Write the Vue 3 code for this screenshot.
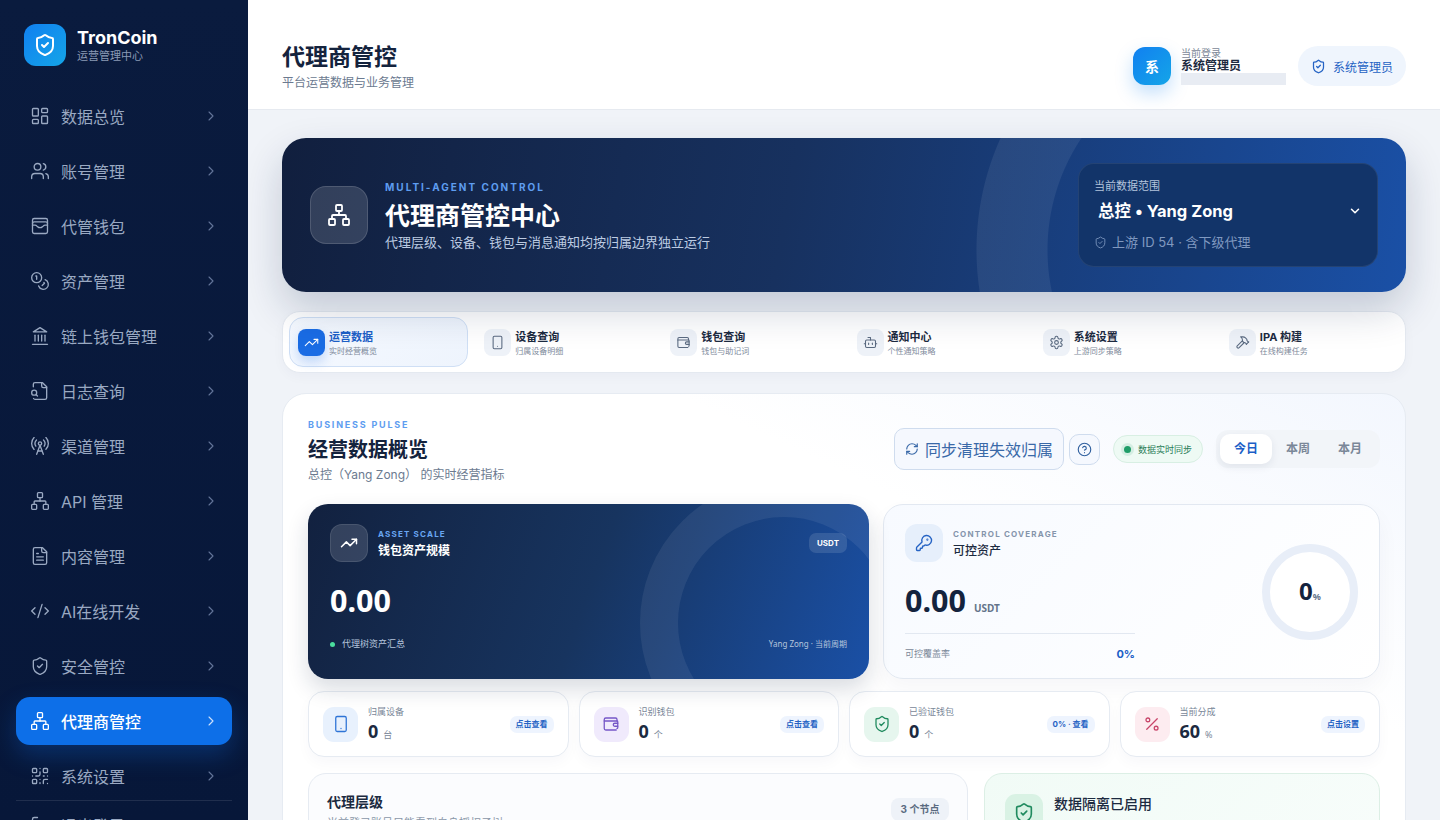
<script setup>
import { h } from 'vue'

// lucide 风格图标
const icons = {
  dashboard: '<rect x="3" y="3" width="7" height="9" rx="1"/><rect x="14" y="3" width="7" height="5" rx="1"/><rect x="14" y="12" width="7" height="9" rx="1"/><rect x="3" y="16" width="7" height="5" rx="1"/>',
  users: '<path d="M16 21v-2a4 4 0 0 0-4-4H6a4 4 0 0 0-4 4v2"/><circle cx="9" cy="7" r="4"/><path d="M16 3.128a4 4 0 0 1 0 7.744"/><path d="M22 21v-2a4 4 0 0 0-3-3.87"/>',
  walletCards: '<rect x="3" y="3" width="18" height="18" rx="2"/><path d="M3 9a2 2 0 0 1 2-2h14a2 2 0 0 1 2 2"/><path d="M3 11h3c.8 0 1.6.3 2.1.9l1.1.9c1.6 1.6 4.1 1.6 5.7 0l1.1-.9c.5-.5 1.3-.9 2.1-.9H21"/>',
  coins: '<circle cx="8" cy="8" r="6"/><path d="M18.09 10.37A6 6 0 1 1 10.34 18"/><path d="M7 6h1v4"/><path d="m16.71 13.88.7.71-2.82 2.82"/>',
  landmark: '<path d="M3 22h18"/><path d="M6 18v-7"/><path d="M10 18v-7"/><path d="M14 18v-7"/><path d="M18 18v-7"/><path d="M12 2l8 5H4z"/>',
  fileSearch: '<path d="M14 2v4a2 2 0 0 0 2 2h4"/><path d="M4.268 21a2 2 0 0 0 1.727 1H18a2 2 0 0 0 2-2V7l-5-5H6a2 2 0 0 0-2 2v3"/><path d="m9 18-1.5-1.5"/><circle cx="5" cy="14" r="3"/>',
  tower: '<path d="M4.9 16.1C1 12.2 1 5.8 4.9 1.9"/><path d="M7.8 4.7a6.14 6.14 0 0 0-.8 7.5"/><circle cx="12" cy="9" r="2"/><path d="M16.2 4.8c2 2 2.26 5.11.8 7.47"/><path d="M19.1 1.9a9.96 9.96 0 0 1 0 14.1"/><path d="M9.5 18h5"/><path d="m8 22 4-11 4 11"/>',
  network: '<rect x="16" y="16" width="6" height="6" rx="1"/><rect x="2" y="16" width="6" height="6" rx="1"/><rect x="9" y="2" width="6" height="6" rx="1"/><path d="M5 16v-3a1 1 0 0 1 1-1h12a1 1 0 0 1 1 1v3"/><path d="M12 12V8"/>',
  fileText: '<path d="M15 2H6a2 2 0 0 0-2 2v16a2 2 0 0 0 2 2h12a2 2 0 0 0 2-2V7Z"/><path d="M14 2v4a2 2 0 0 0 2 2h4"/><path d="M10 9H8"/><path d="M16 13H8"/><path d="M16 17H8"/>',
  code: '<path d="m18 16 4-4-4-4"/><path d="m6 8-4 4 4 4"/><path d="m14.5 4-5 16"/>',
  shield: '<path d="M20 13c0 5-3.5 7.5-7.66 8.95a1 1 0 0 1-.67-.01C7.5 20.5 4 18 4 13V6a1 1 0 0 1 1-1c2 0 4.5-1.2 6.24-2.72a1.17 1.17 0 0 1 1.52 0C14.51 3.81 17 5 19 5a1 1 0 0 1 1 1z"/><path d="m9 12 2 2 4-4"/>',
  qr: '<rect x="3" y="3" width="5" height="5" rx="1"/><rect x="16" y="3" width="5" height="5" rx="1"/><rect x="3" y="16" width="5" height="5" rx="1"/><path d="M21 16h-3a2 2 0 0 0-2 2v3"/><path d="M21 21v.01"/><path d="M12 7v3a2 2 0 0 1-2 2H7"/><path d="M3 12h.01"/><path d="M12 3h.01"/><path d="M12 16v.01"/><path d="M16 12h1"/><path d="M21 12v.01"/><path d="M12 21v-1"/>',
  logout: '<path d="M9 21H5a2 2 0 0 1-2-2V5a2 2 0 0 1 2-2h4"/><path d="m16 17 5-5-5-5"/><path d="M21 12H9"/>',
  chevronRight: '<path d="m9 18 6-6-6-6"/>',
  chevronDown: '<path d="m6 9 6 6 6-6"/>',
  trending: '<path d="M22 7 13.5 15.5 8.5 10.5 2 17"/><path d="M16 7h6v6"/>',
  tablet: '<rect x="5" y="2" width="14" height="20" rx="2"/><path d="M12 18h.01"/>',
  wallet: '<path d="M19 20H5a2 2 0 0 1-2-2V6a2 2 0 0 1 2-2h13a2 2 0 0 1 2 2v2"/><path d="M3 8h17a1 1 0 0 1 1 1v8a1 1 0 0 1-1 1"/><path d="M21 11h-4a2 2 0 0 0 0 4h4"/>',
  bot: '<path d="M12 8V4H8"/><rect x="4" y="8" width="16" height="12" rx="2"/><path d="M2 14h2"/><path d="M20 14h2"/><path d="M15 13v2"/><path d="M9 13v2"/>',
  gear: '<path d="M12.22 2h-.44a2 2 0 0 0-2 2v.18a2 2 0 0 1-1 1.73l-.43.25a2 2 0 0 1-2 0l-.15-.08a2 2 0 0 0-2.73.73l-.22.38a2 2 0 0 0 .73 2.73l.15.1a2 2 0 0 1 1 1.72v.51a2 2 0 0 1-1 1.74l-.15.09a2 2 0 0 0-.73 2.73l.22.38a2 2 0 0 0 2.73.73l.15-.08a2 2 0 0 1 2 0l.43.25a2 2 0 0 1 1 1.73V20a2 2 0 0 0 2 2h.44a2 2 0 0 0 2-2v-.18a2 2 0 0 1 1-1.73l.43-.25a2 2 0 0 1 2 0l.15.08a2 2 0 0 0 2.73-.73l.22-.39a2 2 0 0 0-.73-2.73l-.15-.08a2 2 0 0 1-1-1.74v-.5a2 2 0 0 1 1-1.74l.15-.09a2 2 0 0 0 .73-2.73l-.22-.38a2 2 0 0 0-2.73-.73l-.15.08a2 2 0 0 1-2 0l-.43-.25a2 2 0 0 1-1-1.73V4a2 2 0 0 0-2-2z"/><circle cx="12" cy="12" r="3"/>',
  hammer: '<path d="m15 12-8.373 8.373a1 1 0 1 1-3-3L12 9"/><path d="m18 15 4-4"/><path d="m21.5 11.5-1.914-1.914A2 2 0 0 1 19 8.172V7l-2.26-2.26a6 6 0 0 0-4.202-1.756L9 2.96l.92.82A6.18 6.18 0 0 1 12 8.4V10l2 2h1.172a2 2 0 0 1 1.414.586L18.5 14.5"/>',
  refresh: '<path d="M3 12a9 9 0 0 1 9-9 9.75 9.75 0 0 1 6.74 2.74L21 8"/><path d="M21 3v5h-5"/><path d="M21 12a9 9 0 0 1-9 9 9.75 9.75 0 0 1-6.74-2.74L3 16"/><path d="M8 16H3v5"/>',
  help: '<circle cx="12" cy="12" r="10"/><path d="M9.09 9a3 3 0 0 1 5.83 1c0 2-3 3-3 3"/><path d="M12 17h.01"/>',
  key: '<path d="M2.586 17.414A2 2 0 0 0 2 18.828V21a1 1 0 0 0 1 1h3a1 1 0 0 0 1-1v-1a1 1 0 0 1 1-1h1a1 1 0 0 0 1-1v-1a1 1 0 0 1 1-1h.172a2 2 0 0 0 1.414-.586l.814-.814a6.5 6.5 0 1 0-4-4z"/><circle cx="16.5" cy="7.5" r=".5"/>',
  percent: '<path d="M19 5 5 19"/><circle cx="6.5" cy="6.5" r="2.5"/><circle cx="17.5" cy="17.5" r="2.5"/>'
}

const Icon = (props) => h('svg', {
  viewBox: '0 0 24 24',
  fill: 'none',
  stroke: 'currentColor',
  'stroke-width': props.sw || 2,
  'stroke-linecap': 'round',
  'stroke-linejoin': 'round',
  width: props.size || 20,
  height: props.size || 20,
  innerHTML: icons[props.name]
})
Icon.props = ['name', 'size', 'sw']

const menu = [
  { label: '数据总览', icon: 'dashboard' },
  { label: '账号管理', icon: 'users' },
  { label: '代管钱包', icon: 'walletCards' },
  { label: '资产管理', icon: 'coins' },
  { label: '链上钱包管理', icon: 'landmark' },
  { label: '日志查询', icon: 'fileSearch' },
  { label: '渠道管理', icon: 'tower' },
  { label: 'API 管理', icon: 'network' },
  { label: '内容管理', icon: 'fileText' },
  { label: 'AI在线开发', icon: 'code' },
  { label: '安全管控', icon: 'shield' },
  { label: '代理商管控', icon: 'network', active: true },
  { label: '系统设置', icon: 'qr' }
]

const tabs = [
  { title: '运营数据', sub: '实时经营概览', icon: 'trending', active: true },
  { title: '设备查询', sub: '归属设备明细', icon: 'tablet' },
  { title: '钱包查询', sub: '钱包与助记词', icon: 'wallet' },
  { title: '通知中心', sub: '个性通知策略', icon: 'bot' },
  { title: '系统设置', sub: '上游同步策略', icon: 'gear' },
  { title: 'IPA 构建', sub: '在线构建任务', icon: 'hammer' }
]

const stats = [
  { label: '归属设备', value: '0', unit: '台', icon: 'tablet', tone: 'blue', action: '点击查看' },
  { label: '识别钱包', value: '0', unit: '个', icon: 'wallet', tone: 'purple', action: '点击查看' },
  { label: '已验证钱包', value: '0', unit: '个', icon: 'shield', tone: 'green', action: '0% · 查看' },
  { label: '当前分成', value: '60', unit: '%', icon: 'percent', tone: 'red', action: '点击设置' }
]
</script>

<template>
  <div class="layout">
    <aside class="sidebar">
      <div class="brand">
        <div class="brand-logo"><Icon name="shield" :size="24" /></div>
        <div>
          <div class="brand-name">TronCoin</div>
          <div class="brand-sub">运营管理中心</div>
        </div>
      </div>
      <nav class="menu">
        <a v-for="item in menu" :key="item.label" class="menu-item" :class="{ active: item.active }">
          <Icon :name="item.icon" :size="20" :sw="1.6" />
          <span class="menu-label">{{ item.label }}</span>
          <Icon name="chevronRight" :size="16" :sw="1.6" class="menu-arrow" />
        </a>
      </nav>
      <div class="menu-foot">
        <a class="menu-item">
          <Icon name="logout" :size="20" :sw="1.6" />
          <span class="menu-label">退出登录</span>
        </a>
      </div>
    </aside>

    <div class="content">
      <header class="topbar">
        <div>
          <h1 class="page-title">代理商管控</h1>
          <p class="page-sub">平台运营数据与业务管理</p>
        </div>
        <div class="user-area">
          <div class="avatar">系</div>
          <div class="user-text">
            <div class="user-hint">当前登录</div>
            <div class="user-name">系统管理员</div>
            <div class="user-mask"></div>
          </div>
          <div class="role-pill"><Icon name="shield" :size="15" />系统管理员</div>
        </div>
      </header>

      <main class="main">
        <section class="hero">
          <div class="hero-ring"></div>
          <div class="hero-icon"><Icon name="network" :size="24" :sw="1.8" /></div>
          <div class="hero-text">
            <div class="eyebrow">MULTI-AGENT CONTROL</div>
            <h2 class="hero-title">代理商管控中心</h2>
            <p class="hero-sub">代理层级、设备、钱包与消息通知均按归属边界独立运行</p>
          </div>
          <div class="scope">
            <div class="scope-label">当前数据范围</div>
            <div class="scope-value">
              <span>总控 • Yang Zong</span>
              <Icon name="chevronDown" :size="14" :sw="2.6" />
            </div>
            <div class="scope-foot"><Icon name="shield" :size="13" :sw="1.6" />上游 ID 54 · 含下级代理</div>
          </div>
        </section>

        <section class="tabs">
          <div v-for="tab in tabs" :key="tab.title" class="tab" :class="{ active: tab.active }">
            <div class="tab-icon"><Icon :name="tab.icon" :size="15" :sw="1.7" /></div>
            <div class="tab-text">
              <div class="tab-title">{{ tab.title }}</div>
              <div class="tab-sub">{{ tab.sub }}</div>
            </div>
          </div>
        </section>

        <section class="panel">
          <div class="panel-head">
            <div class="panel-intro">
              <div class="eyebrow pulse">BUSINESS PULSE</div>
              <h3 class="panel-title">经营数据概览</h3>
              <p class="panel-sub">总控（Yang Zong） 的实时经营指标</p>
            </div>
            <div class="panel-actions">
              <button class="sync-btn"><Icon name="refresh" :size="14" :sw="2" />同步清理失效归属</button>
              <button class="help-btn"><Icon name="help" :size="15" :sw="1.8" /></button>
              <div class="live"><i class="live-dot"></i>数据实时同步</div>
              <div class="segment">
                <span class="seg active">今日</span>
                <span class="seg">本周</span>
                <span class="seg">本月</span>
              </div>
            </div>
          </div>

          <div class="cards">
            <div class="card-asset">
              <div class="asset-ring"></div>
              <div class="card-top">
                <div class="card-icon glass"><Icon name="trending" :size="18" :sw="2" /></div>
                <div class="card-heading">
                  <div class="mini-eyebrow light">ASSET SCALE</div>
                  <div class="card-name">钱包资产规模</div>
                </div>
                <div class="usdt-tag">USDT</div>
              </div>
              <div class="big-num">0.00</div>
              <div class="asset-foot">
                <span class="foot-left"><i class="mint-dot"></i>代理树资产汇总</span>
                <span class="foot-right">Yang Zong · 当前周期</span>
              </div>
            </div>

            <div class="card-cover">
              <div class="cover-left">
                <div class="card-top">
                  <div class="card-icon soft"><Icon name="key" :size="18" :sw="1.8" /></div>
                  <div class="card-heading">
                    <div class="mini-eyebrow">CONTROL COVERAGE</div>
                    <div class="card-name dark">可控资产</div>
                  </div>
                </div>
                <div class="big-num dark">0.00<small>USDT</small></div>
                <div class="cover-rate"><span>可控覆盖率</span><b>0%</b></div>
              </div>
              <div class="gauge"><b>0</b><small>%</small></div>
            </div>
          </div>

          <div class="stats">
            <div v-for="s in stats" :key="s.label" class="stat">
              <div class="stat-icon" :class="s.tone"><Icon :name="s.icon" :size="18" :sw="1.7" /></div>
              <div class="stat-body">
                <div class="stat-label">{{ s.label }}</div>
                <div class="stat-value">{{ s.value }}<small>{{ s.unit }}</small></div>
              </div>
              <div class="stat-action">{{ s.action }}</div>
            </div>
          </div>

          <div class="bottom">
            <div class="tree-card">
              <div>
                <div class="tree-title">代理层级</div>
                <div class="tree-sub">当前登录账号只能看到自身授权子树</div>
              </div>
              <div class="tree-badge">3 个节点</div>
            </div>
            <div class="iso-card">
              <div class="stat-icon green iso-icon"><Icon name="shield" :size="22" :sw="1.8" /></div>
              <div>
                <div class="iso-title">数据隔离已启用</div>
                <div class="iso-sub">按归属边界隔离</div>
              </div>
            </div>
          </div>
        </section>
      </main>
    </div>
  </div>
</template>

<style>
html,
body {
  margin: 0;
  height: 100%;
  overflow: hidden;
}
</style>

<style scoped>
* {
  box-sizing: border-box;
}

.layout {
  display: flex;
  width: 1440px;
  height: 820px;
  overflow: hidden;
  font-family: Inter, "Noto Sans CJK SC", sans-serif;
  color: #0f1f3a;
  background: #eff2f7;
}

/* 侧边栏 */
.sidebar {
  flex: 0 0 248px;
  height: 820px;
  overflow: hidden;
  padding: 24px 16px 0;
  background: linear-gradient(180deg, #0a1b3e 0%, #071739 100%);
}

.brand {
  display: flex;
  align-items: center;
  gap: 11px;
  padding-left: 8px;
  height: 42px;
  margin-bottom: 27px;
}

.brand-logo {
  width: 42px;
  height: 42px;
  display: flex;
  align-items: center;
  justify-content: center;
  border-radius: 12px;
  color: #fff;
  background: linear-gradient(135deg, #1180f0, #14a5e8);
}

.brand-name {
  font-size: 18px;
  line-height: 22px;
  font-weight: 700;
  color: #fff;
}

.brand-sub {
  font-size: 11px;
  line-height: 14px;
  color: #8b9ab5;
}

.menu {
  display: flex;
  flex-direction: column;
  gap: 7px;
  margin-top: -1px;
}

.menu-item {
  display: flex;
  align-items: center;
  height: 48px;
  padding: 0 13px 0 14px;
  gap: 11px;
  border-radius: 14px;
  font-size: 16px;
  color: #9aa9c2;
}

.menu-item svg {
  flex: none;
}

.menu-label {
  flex: 1;
}

.menu-arrow {
  color: #64759a;
}

.menu-item.active {
  color: #fff;
  font-weight: 500;
  background: #0d6fe8;
  box-shadow: 0 10px 24px rgba(13, 111, 232, 0.28);
}

.menu-item.active .menu-arrow {
  color: #cfe2fb;
}

.menu-foot {
  border-top: 1px solid rgba(255, 255, 255, 0.1);
}

/* 顶栏 */
.content {
  flex: 1;
  min-width: 0;
  height: 820px;
  display: flex;
  flex-direction: column;
  background: #f0f3f8;
}

.topbar {
  flex: 0 0 110px;
  display: flex;
  align-items: center;
  justify-content: space-between;
  padding: 23px 34px 0;
  background: #fff;
  border-bottom: 1px solid #e6eaf0;
}

.page-title {
  margin: 0;
  font-size: 23px;
  line-height: 30px;
  font-weight: 700;
  color: #14233d;
}

.page-sub {
  margin: 3px 0 0;
  font-size: 12px;
  line-height: 16px;
  color: #6b7a90;
}

.user-area {
  display: flex;
  align-items: center;
}

.avatar {
  width: 38px;
  height: 38px;
  display: flex;
  align-items: center;
  justify-content: center;
  border-radius: 12px;
  color: #fff;
  font-size: 14px;
  font-weight: 700;
  background: linear-gradient(135deg, #1180f0, #14a5e8);
  box-shadow: 0 8px 18px rgba(17, 128, 240, 0.25);
}

.user-text {
  width: 105px;
  margin: 0 12px 0 10px;
}

.user-hint {
  font-size: 10px;
  line-height: 12px;
  color: #7b8797;
}

.user-name {
  font-size: 12px;
  line-height: 14px;
  font-weight: 700;
  color: #1c2a40;
}

.user-mask {
  height: 12px;
  background: #e8ecf3;
}

.role-pill {
  width: 108px;
  height: 40px;
  display: flex;
  align-items: center;
  justify-content: center;
  gap: 7px;
  border-radius: 20px;
  font-size: 12px;
  color: #2563c4;
  background: #eff5fd;
}

/* 主内容 */
.main {
  flex: 1;
  min-height: 0;
  overflow: hidden;
  padding: 28px 34px 0;
}

.hero {
  position: relative;
  height: 154px;
  display: flex;
  align-items: center;
  padding: 0 28px;
  border-radius: 24px;
  color: #fff;
  background: linear-gradient(100deg, #111f3e 0%, #17315f 45%, #1a50a6 100%);
  box-shadow: 0 18px 40px rgba(15, 35, 75, 0.2);
}

.hero-ring {
  position: absolute;
  top: 0;
  left: 0;
  right: 0;
  bottom: 0;
  border-radius: 24px;
  pointer-events: none;
  background: radial-gradient(circle 273px at 967px 112px, transparent 201px, rgba(255, 255, 255, 0.07) 202px, rgba(255, 255, 255, 0.07) 272px, transparent 273px);
}

.hero-icon {
  position: relative;
  width: 58px;
  height: 58px;
  display: flex;
  align-items: center;
  justify-content: center;
  border-radius: 16px;
  background: rgba(255, 255, 255, 0.14);
  border: 1px solid rgba(255, 255, 255, 0.14);
}

.hero-text {
  position: relative;
  flex: 1;
  margin-left: 17px;
}

.eyebrow {
  font-size: 10px;
  line-height: 14px;
  font-weight: 700;
  letter-spacing: 2px;
  color: #5e9df0;
}

.hero-title {
  margin: 8px 0 0;
  font-size: 25px;
  line-height: 28px;
  font-weight: 700;
}

.hero-sub {
  margin: 3px 0 0;
  font-size: 13px;
  line-height: 18px;
  color: #bccbe2;
}

.scope {
  position: relative;
  width: 300px;
  height: 104px;
  padding: 14px 15px;
  border-radius: 16px;
  background: #123469;
  border: 1px solid rgba(255, 255, 255, 0.08);
}

.scope-label {
  font-size: 11px;
  line-height: 16px;
  color: #b4c4dc;
}

.scope-value {
  display: flex;
  align-items: center;
  justify-content: space-between;
  margin-top: 5px;
  padding-left: 4px;
  font-size: 16.5px;
  line-height: 24px;
  font-weight: 700;
}

.scope-foot {
  display: flex;
  align-items: center;
  gap: 5px;
  margin-top: 10px;
  font-size: 13px;
  line-height: 18px;
  color: #8099c0;
}

/* 标签栏 */
.tabs {
  display: grid;
  grid-template-columns: repeat(6, 1fr);
  gap: 7px;
  height: 62px;
  margin-top: 19px;
  padding: 5px 6px;
  border: 1px solid #e4e9f0;
  border-radius: 18px;
  background: #fff;
  box-shadow: 0 4px 12px rgba(20, 40, 80, 0.03);
}

.tab {
  display: flex;
  align-items: center;
  gap: 4px;
  padding: 0 8px;
  border: 1px solid transparent;
  border-radius: 14px;
}

.tab.active {
  border-color: #cfdff5;
  background: linear-gradient(135deg, #f5f9ff, #eef4fd);
}

.tab-icon {
  flex: none;
  width: 27px;
  height: 27px;
  display: flex;
  align-items: center;
  justify-content: center;
  border-radius: 8px;
  color: #5a6a80;
  background: #eef2f8;
}

.tab.active .tab-icon {
  color: #fff;
  background: #1a6ce4;
  box-shadow: 0 6px 12px rgba(26, 108, 228, 0.24);
}

.tab-text {
  padding-top: 3px;
}

.tab-title {
  font-size: 11px;
  line-height: 14px;
  font-weight: 700;
  color: #1c2a40;
}

.tab.active .tab-title {
  color: #1c5fc7;
}

.tab-sub {
  margin-top: 2px;
  font-size: 8px;
  line-height: 11px;
  color: #7e8a9b;
}

/* 概览面板 */
.panel {
  height: 480px;
  margin-top: 20px;
  padding: 25px 25px 0;
  border: 1px solid #e6ebf2;
  border-radius: 24px;
  background: linear-gradient(205deg, #f3f7fe 0%, #ffffff 34%);
}

.panel-head {
  display: flex;
  justify-content: space-between;
  align-items: center;
  height: 60px;
}

.panel-intro {
  align-self: flex-start;
  margin-top: -1px;
}

.eyebrow.pulse {
  font-size: 9px;
  color: #5e9df0;
  letter-spacing: 1.8px;
}

.panel-title {
  margin: 4px 0 0;
  font-size: 20px;
  line-height: 28px;
  font-weight: 700;
  color: #14233d;
}

.panel-sub {
  margin: 3px 0 0;
  font-size: 12px;
  line-height: 16px;
  color: #6b7a90;
  white-space: pre-wrap;
}

.panel-actions {
  display: flex;
  align-items: center;
}

.sync-btn {
  height: 42px;
  width: 170px;
  display: flex;
  align-items: center;
  justify-content: center;
  gap: 6px;
  padding: 0;
  border: 1px solid #cfdcee;
  border-radius: 10px;
  font: inherit;
  font-size: 16px;
  color: #3a69a8;
  background: #f5f8fe;
}

.help-btn {
  width: 31px;
  height: 31px;
  display: flex;
  align-items: center;
  justify-content: center;
  margin-left: 5px;
  padding: 0;
  border: 1px solid #cfdcee;
  border-radius: 10px;
  color: #2f5f9e;
  background: #f5f8fe;
}

.live {
  display: flex;
  align-items: center;
  gap: 7px;
  width: 90px;
  height: 28px;
  margin-left: 13px;
  padding-left: 10px;
  border: 1px solid #d8efe3;
  border-radius: 14px;
  font-size: 9px;
  color: #2a7d58;
  background: #eefaf4;
}

.live-dot {
  width: 7px;
  height: 7px;
  border-radius: 50%;
  background: #1f9d68;
  box-shadow: 0 0 0 3px rgba(31, 157, 104, 0.12);
}

.segment {
  display: flex;
  height: 38px;
  margin-left: 13px;
  padding: 4px;
  width: 164px;
  border-radius: 12px;
  background: #f2f5f9;
}

.seg {
  width: 52px;
  height: 30px;
  line-height: 30px;
  text-align: center;
  border-radius: 10px;
  font-size: 12px;
  font-weight: 700;
  color: #7a8798;
}

.seg.active {
  color: #1c5fc7;
  background: #fff;
  box-shadow: 0 3px 8px rgba(20, 40, 80, 0.08);
}

.cards {
  display: grid;
  grid-template-columns: 561px 497px;
  gap: 14px;
  margin-top: 25px;
}

.card-asset {
  position: relative;
  height: 175px;
  padding: 20px 22px 0;
  overflow: hidden;
  border-radius: 20px;
  color: #fff;
  background: linear-gradient(110deg, #12213f 0%, #17345f 50%, #1a50a6 100%);
  box-shadow: 0 10px 22px rgba(18, 35, 70, 0.16);
}

.asset-ring {
  position: absolute;
  top: -25px;
  left: 332px;
  width: 288px;
  height: 288px;
  border: 38px solid rgba(255, 255, 255, 0.07);
  border-radius: 50%;
}

.card-top {
  position: relative;
  display: flex;
  align-items: center;
  gap: 10px;
}

.card-heading {
  padding-top: 2px;
}

.card-icon {
  width: 38px;
  height: 38px;
  display: flex;
  align-items: center;
  justify-content: center;
  border-radius: 12px;
}

.card-icon.glass {
  color: #fff;
  background: rgba(255, 255, 255, 0.14);
  border: 1px solid rgba(255, 255, 255, 0.1);
}

.card-icon.soft {
  color: #2563c4;
  background: #e6effb;
}

.mini-eyebrow {
  font-size: 8px;
  line-height: 11px;
  font-weight: 700;
  letter-spacing: 1.2px;
  color: #8595ab;
}

.mini-eyebrow.light {
  color: #6aa6f2;
}

.card-name {
  margin-top: 3px;
  font-size: 12px;
  line-height: 16px;
  font-weight: 700;
  color: #fff;
}

.card-name.dark {
  color: #1c2a40;
  font-weight: 500;
}

.usdt-tag {
  margin-left: auto;
  width: 38px;
  height: 20px;
  line-height: 20px;
  text-align: center;
  border-radius: 7px;
  font-size: 8px;
  font-weight: 700;
  background: rgba(255, 255, 255, 0.12);
}

.big-num {
  position: relative;
  margin-top: 16px;
  font-family: "Noto Sans", "Noto Sans CJK SC", sans-serif;
  font-size: 30.5px;
  line-height: 44px;
  font-weight: 700;
}

.big-num.dark {
  color: #14233d;
}

.big-num small {
  margin-left: 8px;
  font-size: 10px;
  font-weight: 700;
  color: #64748b;
}

.asset-foot {
  position: relative;
  display: flex;
  justify-content: space-between;
  align-items: center;
  margin-top: 15px;
  font-size: 9px;
  line-height: 14px;
  color: #b6c6dd;
}

.foot-left {
  display: flex;
  align-items: center;
  gap: 7px;
}

.foot-right {
  font-family: "Noto Sans", "Noto Sans CJK SC", sans-serif;
  font-size: 8px;
}

.mint-dot {
  width: 5px;
  height: 5px;
  border-radius: 50%;
  background: #4ade9e;
}

.card-cover {
  height: 175px;
  display: flex;
  justify-content: space-between;
  padding: 19px 21px 0;
  border: 1px solid #e2e8f1;
  border-radius: 20px;
  background: linear-gradient(135deg, #f7faff, #ffffff);
  box-shadow: 0 10px 22px rgba(18, 35, 70, 0.04);
}

.cover-left {
  width: 230px;
}

.cover-rate {
  display: flex;
  justify-content: space-between;
  align-items: center;
  margin-top: 3px;
  padding-top: 12px;
  border-top: 1px solid #e2e8f1;
  font-size: 9px;
  line-height: 16px;
  color: #7a8798;
}

.cover-rate b {
  font-size: 11px;
  color: #1c5fc7;
}

.gauge {
  width: 96px;
  height: 96px;
  margin: 20px 0 0;
  display: flex;
  align-items: baseline;
  justify-content: center;
  padding-top: 24px;
  border: 8px solid #e8eef8;
  border-radius: 50%;
  font-family: "Noto Sans", sans-serif;
  color: #14233d;
  background: #fff;
}

.gauge b {
  font-size: 24px;
  line-height: 30px;
}

.gauge small {
  font-size: 9px;
  font-weight: 700;
  color: #64748b;
}

.stats {
  display: grid;
  grid-template-columns: repeat(4, 1fr);
  gap: 10px;
  margin-top: 12px;
}

.stat {
  height: 66px;
  display: flex;
  align-items: center;
  padding: 0 14px;
  border: 1px solid #e6ebf2;
  border-radius: 16px;
  background: #fff;
  box-shadow: 0 6px 14px rgba(20, 40, 80, 0.03);
}

.stat-icon {
  flex: none;
  width: 35px;
  height: 35px;
  display: flex;
  align-items: center;
  justify-content: center;
  border-radius: 11px;
}

.stat-icon.blue {
  color: #2e74d6;
  background: #e8f1fd;
}

.stat-icon.purple {
  color: #7557c7;
  background: #f0eafc;
}

.stat-icon.green {
  color: #1f8a5e;
  background: #e6f6ee;
}

.stat-icon.red {
  color: #c8456a;
  background: #fdecf0;
}

.stat-body {
  flex: 1;
  margin-left: 10px;
  padding-top: 3px;
}

.stat-label {
  font-size: 9px;
  line-height: 13px;
  color: #7a8798;
}

.stat-value {
  margin-top: 2px;
  font-family: "Noto Sans", "Noto Sans CJK SC", sans-serif;
  font-size: 18px;
  line-height: 22px;
  font-weight: 700;
  color: #1c2a40;
}

.stat-value small {
  margin-left: 5px;
  font-size: 9px;
  font-weight: 400;
  color: #7a8798;
}

.stat-action {
  flex: none;
  padding: 0 6px;
  height: 17px;
  line-height: 17px;
  border-radius: 7px;
  font-size: 8px;
  font-weight: 700;
  color: #2563c4;
  background: #eef4fe;
}

.bottom {
  display: grid;
  grid-template-columns: 660px 396px;
  gap: 16px;
  margin-top: 16px;
}

.tree-card {
  height: 120px;
  display: flex;
  justify-content: space-between;
  align-items: flex-start;
  padding: 18px 18px 0;
  border: 1px solid #e6ebf2;
  border-radius: 18px;
  background: #fbfcfe;
}

.tree-title {
  font-size: 14px;
  line-height: 20px;
  font-weight: 700;
  color: #1c2a40;
}

.tree-sub {
  margin-top: 4px;
  font-size: 11px;
  line-height: 14px;
  color: #8a97a8;
}

.tree-badge {
  margin-top: 6px;
  width: 58px;
  height: 23px;
  line-height: 23px;
  text-align: center;
  border-radius: 8px;
  font-size: 10px;
  font-weight: 700;
  color: #5a6a80;
  background: #eef2f8;
}

.iso-card {
  height: 120px;
  display: flex;
  gap: 11px;
  padding: 20px 20px 0;
  border: 1px solid #dcefe5;
  border-radius: 18px;
  background: linear-gradient(135deg, #f1fbf6, #f8fdfb);
}

.stat-icon.iso-icon {
  width: 38px;
  height: 38px;
  background: #d9f2e4;
}

.iso-title {
  font-size: 14px;
  line-height: 20px;
  font-weight: 500;
  color: #1c2a40;
}

.iso-sub {
  margin-top: 5px;
  font-size: 11px;
  line-height: 14px;
  color: #7a8798;
}
</style>
